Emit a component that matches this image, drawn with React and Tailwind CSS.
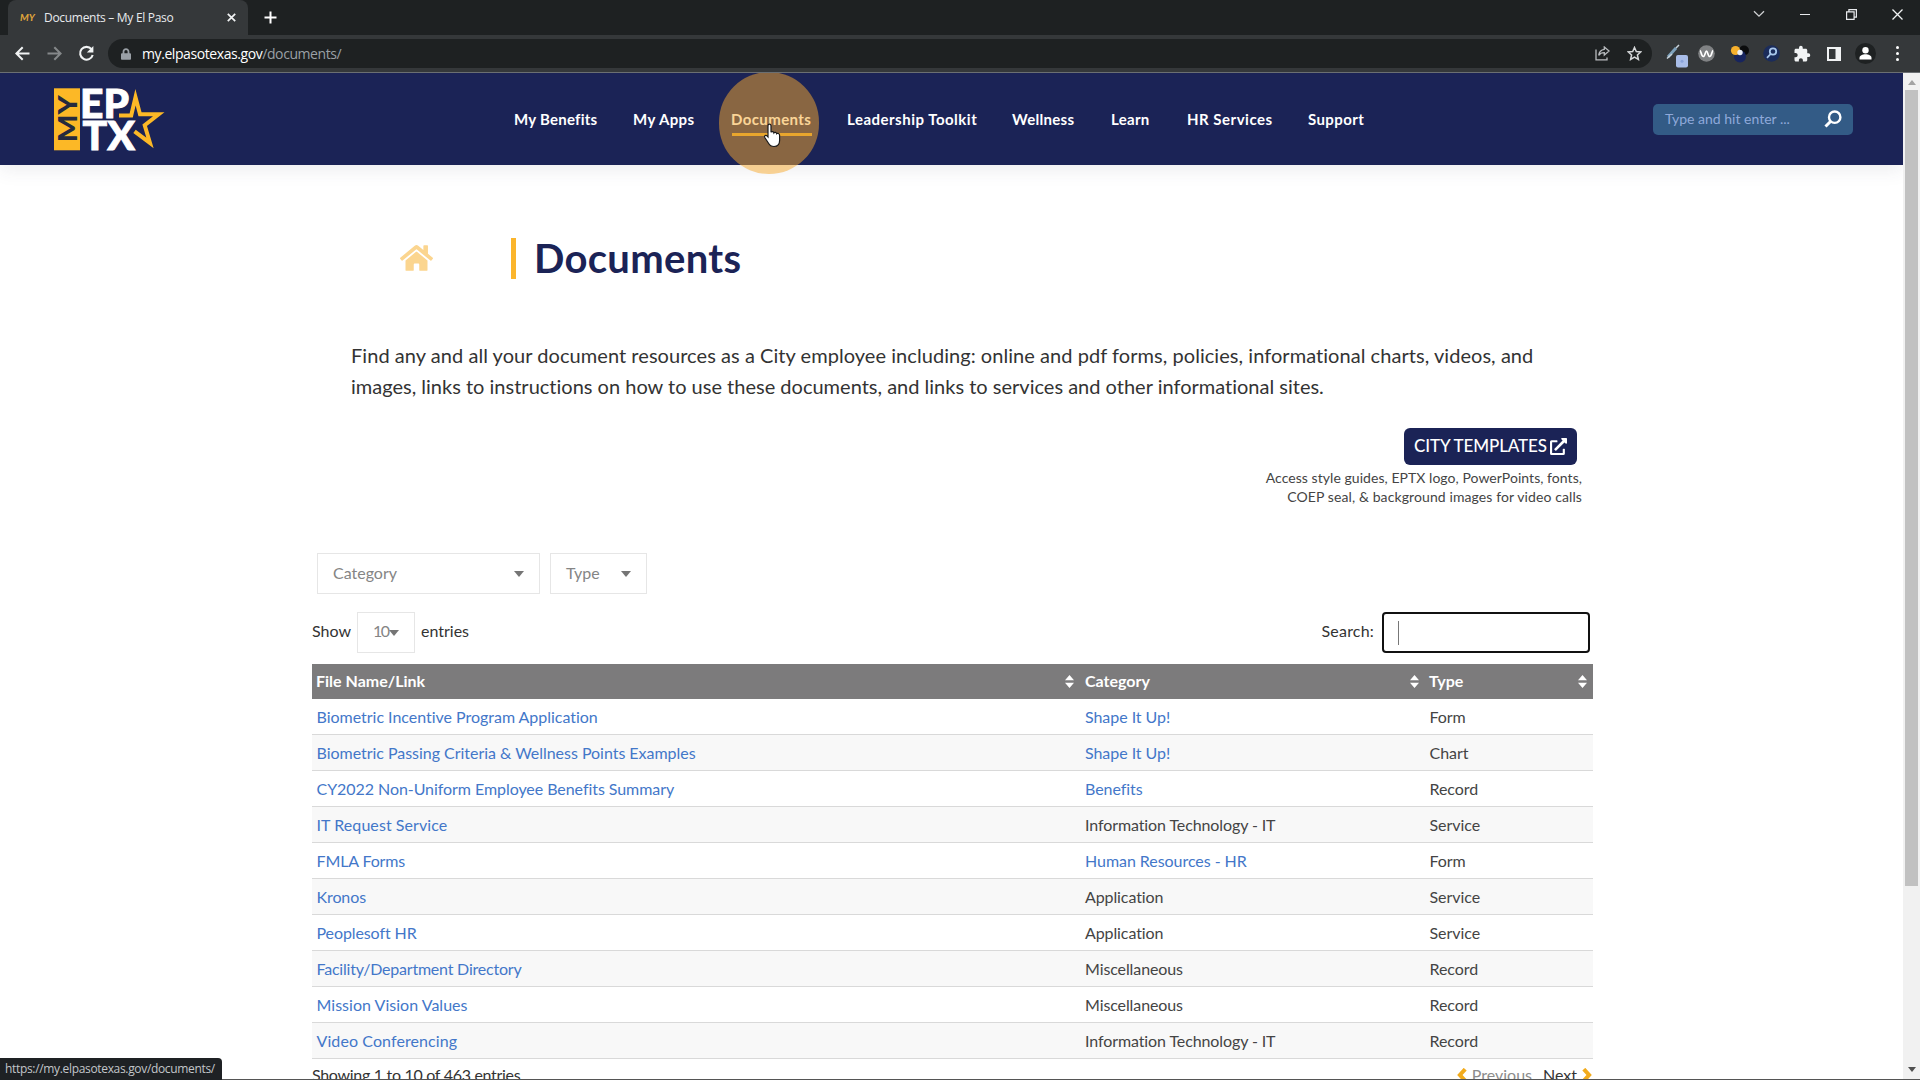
import React from "react";
import { FaHome, FaExternalLinkAlt, FaLock } from "react-icons/fa";
import { MdExtension } from "react-icons/md";

const NAV = [
  { label: "My Benefits", cls: "w-[83px] tracking-[0.25px]" },
  { label: "My Apps", cls: "w-[62px] tracking-[0.4px]" },
  { label: "Documents", cls: "w-[80px] tracking-[0.4px]", active: true },
  { label: "Leadership Toolkit", cls: "w-[129px] tracking-[0.5px]" },
  { label: "Wellness", cls: "w-[63px] tracking-[0.3px]" },
  { label: "Learn", cls: "w-[40px] tracking-[0.3px]" },
  { label: "HR Services", cls: "w-[85px] tracking-[0.5px]" },
  { label: "Support", cls: "w-[57px] tracking-[0.4px]" },
];

const ROWS = [
  ["Biometric Incentive Program Application", "tracking-[-0.02px]", "Shape It Up!", true, "Form"],
  ["Biometric Passing Criteria & Wellness Points Examples", "tracking-[-0.03px]", "Shape It Up!", true, "Chart"],
  ["CY2022 Non-Uniform Employee Benefits Summary", "tracking-[-0.06px]", "Benefits", true, "Record"],
  ["IT Request Service", "tracking-[0.07px]", "Information Technology - IT", false, "Service"],
  ["FMLA Forms", "tracking-[-0.12px]", "Human Resources - HR", true, "Form"],
  ["Kronos", "tracking-[-0.1px]", "Application", false, "Service"],
  ["Peoplesoft HR", "tracking-[-0.1px]", "Application", false, "Service"],
  ["Facility/Department Directory", "tracking-[-0.21px]", "Miscellaneous", false, "Record"],
  ["Mission Vision Values", "tracking-[0.03px]", "Miscellaneous", false, "Record"],
  ["Video Conferencing", "tracking-[0.09px]", "Information Technology - IT", false, "Record"],
];

function TabStrip() {
  return (
    <div className="flex h-[35px] shrink-0 bg-[#1e2122]">
      <div className="ml-[8px] flex w-[240px] items-center rounded-t-[8px] bg-[#35383a] pl-[12px]">
        <span className="w-[24px] font-['Lato'] text-[10px] font-bold italic text-[#e0a63a]">MY</span>
        <span className="whitespace-nowrap text-[12px] tracking-[-0.3px] text-[#e8eaed]">Documents – My El Paso</span>
        <svg className="ml-[54px] h-[9px] w-[9px]" viewBox="0 0 9 9" stroke="#f1f3f4" strokeWidth="1.7">
          <path d="M.8.8l7.4 7.4M8.2.8L.8 8.2" />
        </svg>
      </div>
      <svg className="ml-[16px] mt-[11px] h-[13px] w-[13px]" viewBox="0 0 13 13" stroke="#fff" strokeWidth="2">
        <path d="M6.5.5v12M.5 6.5h12" />
      </svg>
      <div className="ml-auto mt-[7px] flex h-[14px] items-center">
        <svg className="h-[8px] w-[12px]" viewBox="0 0 12 8" fill="none" stroke="#cfd1d3" strokeWidth="1.3">
          <path d="M1 1.2l5 5 5-5" />
        </svg>
        <div className="ml-[35px] h-px w-[10px] bg-[#e8eaed]" />
        <svg className="ml-[36px] h-[11px] w-[11px]" viewBox="0 0 11 11" fill="none" stroke="#e8eaed" strokeWidth="1.2">
          <path d="M.6 2.8h7.5v7.5H.6zM2.9 2.6V.6h7.5v7.5H8.2" />
        </svg>
        <svg className="ml-[35px] mr-[17px] h-[11px] w-[11px]" viewBox="0 0 11 11" stroke="#f1f3f4" strokeWidth="1.3">
          <path d="M.5.5l10 10M10.5.5l-10 10" />
        </svg>
      </div>
    </div>
  );
}

function Toolbar() {
  return (
    <div className="flex h-[38px] shrink-0 items-center border-b border-[#6b6f72] bg-[#35383a]">
      <svg className="ml-[15px] h-[15px] w-[15px]" viewBox="0 0 15 15" fill="none" stroke="#f1f3f4" strokeWidth="2">
        <path d="M14.5 7.5H1.6M7.7 1.2L1.4 7.5l6.3 6.3" />
      </svg>
      <svg className="ml-[17px] h-[15px] w-[15px]" viewBox="0 0 15 15" fill="none" stroke="#85888a" strokeWidth="2">
        <path d="M.5 7.5h12.9M7.3 1.2l6.3 6.3-6.3 6.3" />
      </svg>
      <svg className="ml-[16px] h-[17px] w-[17px]" viewBox="0 0 17 17" fill="none">
        <path d="M13.5 4.2A6.4 6.4 0 1 0 14.7 10" stroke="#f1f3f4" strokeWidth="2.1" />
        <path d="M15.4 1v6.6H8.8z" fill="#f1f3f4" />
      </svg>
      <div className="ml-[13px] flex h-[29px] w-[1544px] items-center rounded-full bg-[#1e2122] pl-[13px]">
        <FaLock className="h-[12px] w-[10px] text-[#9aa0a6]" />
        <span className="ml-[11px] whitespace-nowrap text-[14px] tracking-[-0.42px] text-[#9aa0a6]">
          <span className="text-white">my.elpasotexas.gov</span>/documents/
        </span>
        <svg className="ml-auto h-[15px] w-[15px]" viewBox="0 0 15 15" fill="none" stroke="#b9bcbf" strokeWidth="1.3">
          <path d="M1 3.5v10.4h11v-2.5" />
          <path d="M9.3 1l4.8 4-4.8 4V6.6c-2.4 0-4.3.7-5.6 2.7.4-3.5 2.4-5.6 5.6-6z" />
        </svg>
        <svg className="ml-[17px] mr-[10px] h-[15px] w-[15px]" viewBox="0 0 15 15" fill="none" stroke="#d5d7d9" strokeWidth="1.5">
          <path d="M7.5 1.5l1.8 4.1 4.4.4-3.3 3 1 4.4-3.9-2.3-3.9 2.3 1-4.4-3.3-3 4.4-.4z" />
        </svg>
      </div>
      <svg className="ml-[14px] mt-[4px] h-[24px] w-[22px]" viewBox="0 0 22 24">
        <path d="M2 13l8-9" stroke="#7fa3bd" strokeWidth="3" />
        <path d="M1 14.5l5-4.5M10 4l3-3" stroke="#c9d3da" strokeWidth="1.5" />
        <rect x="10" y="11" width="12" height="12.5" rx="2" fill="#a9bde8" />
        <circle cx="16" cy="17.2" r="1.5" fill="#8aa3da" />
      </svg>
      <svg className="ml-[10px] h-[17px] w-[17px]" viewBox="0 0 17 17">
        <circle cx="8.5" cy="8.5" r="8.3" fill="#808284" />
        <path d="M2 5.5c1 0 1.3 6 3.3 6 1.7 0 2-5.5 3.2-5.5s1.5 5.5 3.2 5.5c2 0 2.3-6 3.3-6" fill="none" stroke="#fff" strokeWidth="1.7" />
      </svg>
      <svg className="ml-[15px] h-[18px] w-[19px]" viewBox="0 0 19 18">
        <circle cx="14" cy="5.5" r="5" fill="#0b0c0d" />
        <circle cx="10" cy="11.5" r="6" fill="#17245e" />
        <circle cx="5.5" cy="5.5" r="4.6" fill="#f7b02c" />
        <circle cx="10" cy="7.5" r="2.7" fill="#e9eef5" />
      </svg>
      <svg className="ml-[14px] h-[17px] w-[17px]" viewBox="0 0 17 17" fill="none">
        <circle cx="8.5" cy="8.5" r="8.3" fill="#1b2c5b" />
        <circle cx="10" cy="6.5" r="3.2" stroke="#a9c8ec" strokeWidth="1.8" />
        <path d="M7.6 9l-3.6 3.8" stroke="#a9c8ec" strokeWidth="1.8" />
      </svg>
      <MdExtension className="ml-[13px] h-[18px] w-[18px] text-[#f1f3f4]" />
      <svg className="ml-[16px] h-[14px] w-[14px]" viewBox="0 0 14 14">
        <rect width="14" height="14" fill="#f1f3f4" />
        <rect x="2" y="2" width="6.5" height="10" fill="#35383a" />
      </svg>
      <svg className="ml-[14px] h-[21px] w-[21px]" viewBox="0 0 21 21">
        <circle cx="10.5" cy="10.5" r="10.5" fill="#1e2122" />
        <circle cx="10.5" cy="7.3" r="3.2" fill="#fff" />
        <path d="M4.5 16.5V15c0-2.4 3-3.7 6-3.7s6 1.3 6 3.7v1.5z" fill="#fff" />
      </svg>
      <div className="ml-[20px] flex flex-col gap-[3px]">
        <div className="h-[3px] w-[3px] rounded-full bg-white" />
        <div className="h-[3px] w-[3px] rounded-full bg-white" />
        <div className="h-[3px] w-[3px] rounded-full bg-white" />
      </div>
    </div>
  );
}

function Logo() {
  return (
    <svg className="ml-[54px] h-[63px] w-[113px] overflow-visible font-['Lato']" viewBox="54 88 113 63">
      <rect x="54" y="88.3" width="26" height="62" fill="#fcb826" />
      <text transform="translate(76.8 142.3) rotate(-90)" fontSize="26.5" fontWeight="900" fill="#252a3e" textLength="47" lengthAdjust="spacingAndGlyphs">MY</text>
      <text x="80" y="117.6" fontSize="39.5" fontWeight="900" fill="#fff" stroke="#fff" strokeWidth="0.9" textLength="49" lengthAdjust="spacingAndGlyphs">EP</text>
      <text x="82.5" y="149.6" fontSize="39.5" fontWeight="900" fill="#fff" stroke="#fff" strokeWidth="0.9" textLength="52.5" lengthAdjust="spacingAndGlyphs">TX</text>
      <path d="M119 115.500h12.200l4.300-18.200 4.500 16.900h18.700l-14 11 5.300 17.700-15.500-11.600" fill="none" stroke="#fcb826" strokeWidth="4" strokeMiterlimit="8" />
    </svg>
  );
}

function Pointer() {
  return (
    <svg className="absolute left-[32px] top-[14px] h-[25px] w-[19px]" viewBox="0 0 19 25">
      <path
        d="M5 2.7C5 .6 8 .6 8 2.700v6.500c.5-1 2.700-.8 2.900.7.7-1 2.600-.6 2.800.8.8-.8 2.900-.3 2.900 1.600v5.200c0 3.800-2 6-5.600 6-3 0-4.300-1-5.500-3.200L1.800 14.500c-.9-1.700 1-2.900 2.200-1.600L5 14z"
        fill="#fff" stroke="#1a1a1a" strokeWidth="1.2"
      />
    </svg>
  );
}

function SiteHeader() {
  return (
    <header className="flex h-[92px] items-center bg-[#1b2356] shadow-[0_4px_18px_rgba(60,60,90,0.1)]">
      <Logo />
      <nav className="ml-[347px] flex gap-[36px] pb-px text-[15px] font-bold text-white">
        {NAV.map((n) => (
          <div key={n.label} className={"relative whitespace-nowrap leading-[20px] " + n.cls}>
            {n.label}
            {n.active && (
              <>
                <div className="absolute left-[1px] top-[24px] h-[3px] w-[80px] bg-[#fcb826]/85" />
                <div className="absolute -left-[12px] -top-[37px] h-[102px] w-[100px] rounded-full bg-[#f7aa2d]/50" />
                <Pointer />
              </>
            )}
          </div>
        ))}
      </nav>
      <div className="ml-auto mr-[50px] flex h-[31px] w-[200px] items-center rounded-[5px] bg-[#335b86] pl-[12px]">
        <span className="whitespace-nowrap pb-[2px] text-[14px] text-[#8fa9da]">Type and hit enter ...</span>
        <svg className="ml-auto mr-[11px] h-[18px] w-[18px]" viewBox="0 0 18 18" fill="none" stroke="#fff">
          <circle cx="10.7" cy="7.2" r="5.7" strokeWidth="2.4" />
          <path d="M6.5 11.5l-5 5" strokeWidth="3" />
        </svg>
      </div>
    </header>
  );
}

function Caret({ className }) {
  return (
    <svg className={"h-[6px] w-[10px] shrink-0 " + className} viewBox="0 0 10 6" fill="#757575">
      <path d="M0 0h10L5 6z" />
    </svg>
  );
}

function Sort() {
  return (
    <svg className="ml-auto mr-[6px] h-[13px] w-[9px]" viewBox="0 0 9 13" fill="#fff">
      <path d="M4.5 0L9 5.2H0zM4.5 13L0 7.8h9z" />
    </svg>
  );
}

function Filters() {
  return (
    <>
      <div className="ml-[317px] mt-[46px] flex h-[41px] gap-[10px] text-[16px] text-[#858585]">
        <div className="flex w-[223px] items-center border border-[#e6e6e6] pl-[15px]">
          <span className="pb-px">Category</span>
          <Caret className="ml-auto mr-[15px]" />
        </div>
        <div className="flex w-[97px] items-center border border-[#e6e6e6] pl-[15px]">
          <span className="pb-px">Type</span>
          <Caret className="ml-auto mr-[15px]" />
        </div>
      </div>
      <div className="ml-[312px] mt-[18px] flex h-[41px] w-[1278px] items-center text-[16px] text-[#333]">
        <span className="pb-[3px]">Show</span>
        <div className="ml-[6px] flex h-[41px] w-[58px] items-center border border-[#e6e6e6] pl-[15px] text-[#858585]">
          <span className="w-[16px] whitespace-nowrap pb-[3px] tracking-[-1.5px]">10</span>
          <Caret className="" />
        </div>
        <span className="ml-[6px] pb-[3px]">entries</span>
        <span className="ml-auto pb-[3px] tracking-[0.2px]">Search:</span>
        <div className="ml-[8px] flex h-[41px] w-[208px] items-center rounded-[4px] border-2 border-[#111] pl-[14px]">
          <div className="h-[24px] w-px bg-[#777]" />
        </div>
      </div>
    </>
  );
}

function Table() {
  return (
    <div className="ml-[312px] mt-[11px] w-[1281px] text-[16px] text-[#444]">
      <div className="flex h-[35px] items-center bg-[#7c7b7c] font-bold text-white">
        <div className="flex w-[768px] items-center pl-[4px]"><span className="pb-[2px]">File Name/Link</span><Sort /></div>
        <div className="flex w-[345px] items-center pl-[5px]"><span className="pb-[2px]">Category</span><Sort /></div>
        <div className="flex w-[168px] items-center pl-[4px]"><span className="pb-[2px]">Type</span><Sort /></div>
      </div>
      {ROWS.map(([name, cls, cat, link, type], i) => (
        <div key={name} className={"flex h-[36px] items-center border-b border-[#d9d9d9] " + (i % 2 ? "bg-[#f8f8f8]" : "bg-white")}>
          <div className={"w-[768px] whitespace-nowrap pl-[4.5px] text-[#4377c9] " + cls}>{name}</div>
          <div className={"w-[345px] pl-[5px] " + (link ? "tracking-[-0.05px] text-[#4377c9]" : "tracking-[-0.1px]")}>{cat}</div>
          <div className="w-[168px] pl-[4.5px] tracking-[-0.05px]">{type}</div>
        </div>
      ))}
      <div className="flex items-center pt-[5px] leading-[22px] text-[#333]">
        <span className="tracking-[-0.3px]">Showing 1 to 10 of 463 entries</span>
        <svg className="ml-auto h-[14px] w-[10px]" viewBox="0 0 10 14" fill="none" stroke="#f2ab1c" strokeWidth="4">
          <path d="M8.200 1.200L2.900 7l5.300 5.800" />
        </svg>
        <span className="ml-[5px] text-[#8c8c8c]">Previous</span>
        <span className="ml-[11px]">Next</span>
        <svg className="ml-[5px] mr-px h-[14px] w-[10px]" viewBox="0 0 10 14" fill="none" stroke="#f2ab1c" strokeWidth="4">
          <path d="M1.800 1.200L7.100 7l-5.300 5.800" />
        </svg>
      </div>
    </div>
  );
}

export default function App() {
  return (
    <div className="relative flex h-[1080px] w-[1920px] flex-col overflow-hidden bg-white font-['Open_Sans',sans-serif]">
      <TabStrip />
      <Toolbar />
      <div className="flex h-[1006px] shrink-0 overflow-hidden">
        <div className="w-[1903px] font-['Lato',sans-serif]">
          <SiteHeader />
          <main>
            <div className="flex h-[114px] items-end pl-[400px]">
              <FaHome className="mb-[6px] h-[30px] w-[33px] text-[#fbd58f]" />
              <div className="ml-[78px] h-[41px] w-[5px] bg-[#fbb52c]" />
              <h1 className="ml-[18px] text-[40px] font-bold leading-[42px] tracking-[0.3px] text-[#1b2356]">Documents</h1>
            </div>
            <div className="ml-[351px] mt-[61px] whitespace-nowrap text-[20px] leading-[30.6px] text-[#333]">
              <div className="tracking-[0.05px]">
                Find any and all your document resources as a City employee including: online and pdf forms, policies, informational charts, videos, and
              </div>
              <div className="tracking-[0.003px]">
                images, links to instructions on how to use these documents, and links to services and other informational sites.
              </div>
            </div>
            <div className="mr-[326px] mt-[27px] flex h-[37px] justify-end">
              <div className="flex w-[173px] items-center rounded-[6px] bg-[#1b2356] pl-[10px] text-[17px] font-medium text-white">
                <span className="whitespace-nowrap pb-[2px] tracking-[-0.1px]">CITY TEMPLATES</span>
                <FaExternalLinkAlt className="ml-auto mr-[10px] h-[17px] w-[17px]" />
              </div>
            </div>
            <div className="mb-[47px] mr-[321px] mt-[4px] text-right text-[14px] leading-[18.5px] text-[#444]">
              <div className="tracking-[0.05px]">Access style guides, EPTX logo, PowerPoints, fonts,</div>
              <div className="tracking-[0.1px]">COEP seal, &amp; background images for video calls</div>
            </div>
            <Filters />
            <Table />
          </main>
        </div>
        <div className="flex w-[17px] flex-col items-center bg-[#f1f1f1]">
          <svg className="mt-[7px] h-[5px] w-[8px]" viewBox="0 0 8 5" fill="#a3a3a3"><path d="M0 5L4 0l4 5z" /></svg>
          <div className="mt-[5px] h-[796px] w-[13px] bg-[#c1c1c1]" />
          <svg className="mb-[7px] mt-auto h-[5px] w-[8px]" viewBox="0 0 8 5" fill="#505050"><path d="M0 0h8L4 5z" /></svg>
        </div>
      </div>
      <div className="h-px shrink-0 bg-[#555]" />
      <div className="absolute bottom-0 left-0 flex h-[22px] w-[222px] items-center rounded-tr-[4px] bg-[#1e2124] pl-[5px]">
        <span className="whitespace-nowrap text-[12px] tracking-[-0.33px] text-[#c3c6ca]">https://my.elpasotexas.gov/documents/</span>
      </div>
    </div>
  );
}
